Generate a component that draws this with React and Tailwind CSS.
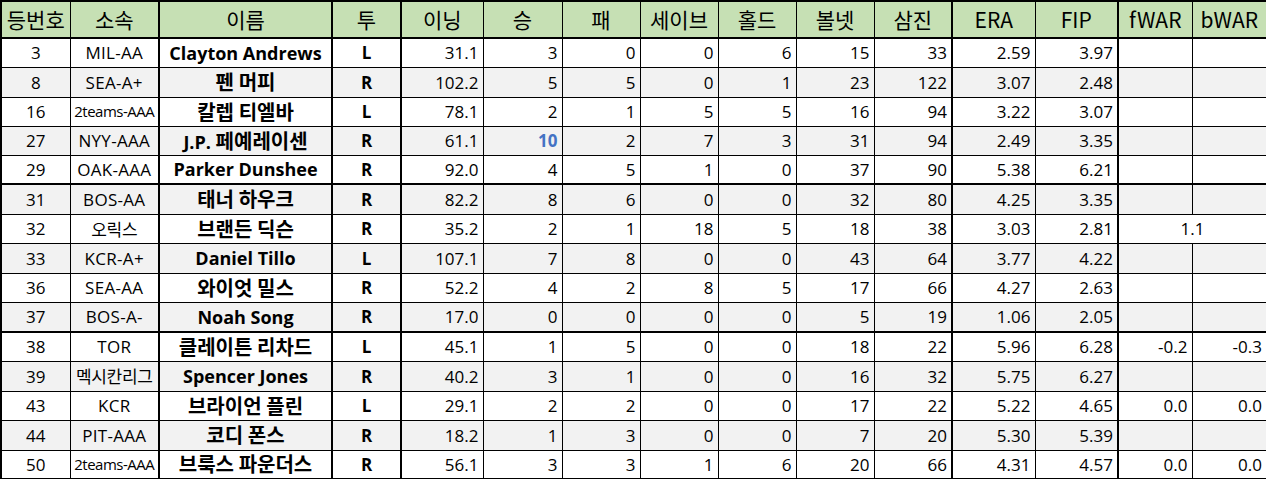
const headers = ['등번호', '소속', '이름', '투', '이닝', '승', '패', '세이브', '홀드', '볼넷', '삼진', 'ERA', 'FIP', 'fWAR', 'bWAR'];

// 칼럼 폭 / 왼쪽 테두리 두께
const cols = [
  { w: 'w-[69px]', l: 'border-l-2' },
  { w: 'w-[89px]', l: 'border-l' },
  { w: 'w-[173px]', l: 'border-l-2' },
  { w: 'w-[69px]', l: 'border-l-2' },
  { w: 'w-[82px]', l: 'border-l-2' },
  { w: 'w-[79px]', l: 'border-l' },
  { w: 'w-[78px]', l: 'border-l' },
  { w: 'w-[78px]', l: 'border-l' },
  { w: 'w-[78px]', l: 'border-l' },
  { w: 'w-[78px]', l: 'border-l' },
  { w: 'w-[78px]', l: 'border-l' },
  { w: 'w-[83px]', l: 'border-l-2' },
  { w: 'w-[83px]', l: 'border-l' },
  { w: 'w-[74px]', l: 'border-l-2' },
  { w: 'w-[75px]', l: 'border-l' },
];

const rows = [
  ['3', 'MIL-AA', 'Clayton Andrews', 'L', '31.1', '3', '0', '0', '6', '15', '33', '2.59', '3.97', '', ''],
  ['8', 'SEA-A+', '펜 머피', 'R', '102.2', '5', '5', '0', '1', '23', '122', '3.07', '2.48', '', ''],
  ['16', '2teams-AAA', '칼렙 티엘바', 'L', '78.1', '2', '1', '5', '5', '16', '94', '3.22', '3.07', '', ''],
  ['27', 'NYY-AAA', 'J.P. 페예레이센', 'R', '61.1', '10', '2', '7', '3', '31', '94', '2.49', '3.35', '', ''],
  ['29', 'OAK-AAA', 'Parker Dunshee', 'R', '92.0', '4', '5', '1', '0', '37', '90', '5.38', '6.21', '', ''],
  ['31', 'BOS-AA', '태너 하우크', 'R', '82.2', '8', '6', '0', '0', '32', '80', '4.25', '3.35', '', ''],
  ['32', '오릭스', '브랜든 딕슨', 'R', '35.2', '2', '1', '18', '5', '18', '38', '3.03', '2.81', '1.1', null],
  ['33', 'KCR-A+', 'Daniel Tillo', 'L', '107.1', '7', '8', '0', '0', '43', '64', '3.77', '4.22', '', ''],
  ['36', 'SEA-AA', '와이엇 밀스', 'R', '52.2', '4', '2', '8', '5', '17', '66', '4.27', '2.63', '', ''],
  ['37', 'BOS-A-', 'Noah Song', 'R', '17.0', '0', '0', '0', '0', '5', '19', '1.06', '2.05', '', ''],
  ['38', 'TOR', '클레이튼 리차드', 'L', '45.1', '1', '5', '0', '0', '18', '22', '5.96', '6.28', '-0.2', '-0.3'],
  ['39', '멕시칸리그', 'Spencer Jones', 'R', '40.2', '3', '1', '0', '0', '16', '32', '5.75', '6.27', '', ''],
  ['43', 'KCR', '브라이언 플린', 'L', '29.1', '2', '2', '0', '0', '17', '22', '5.22', '4.65', '0.0', '0.0'],
  ['44', 'PIT-AAA', '코디 폰스', 'R', '18.2', '1', '3', '0', '0', '7', '20', '5.30', '5.39', '', ''],
  ['50', '2teams-AAA', '브룩스 파운더스', 'R', '56.1', '3', '3', '1', '6', '20', '66', '4.31', '4.57', '0.0', '0.0'],
];

const thickTop = [0, 5, 10];

// 한글 부분만 따로 크기 지정
const Mixed = ({ text, ko }) =>
  text.split(/([가-힣]+)/).map((part, i) =>
    /[가-힣]/.test(part) ? (
      <span key={i} className={`font-['Noto_Sans_CJK_KR',sans-serif] ${ko}`}>{part}</span>
    ) : (
      part
    )
  );

const cellText = (ci, val, ri) => {
  if (ci === 0) return 'text-center text-[17px]';
  if (ci === 1) return val.length > 8 ? 'text-center text-[15px] tracking-[-0.5px]' : 'text-center text-[17px] tracking-[0.3px]';
  if (ci === 2) return 'text-center text-[18px] font-bold';
  if (ci === 3) return 'text-center text-[17px] font-bold';
  if (ci === 5 && ri === 3) return 'text-right pr-1 text-[17px] font-bold text-[#4472c4]';
  return 'text-right pr-1 text-[17px]';
};

export default function App() {
  return (
    <div className="w-[1266px] h-[479px] bg-white overflow-hidden font-['Open_Sans','Noto_Sans_CJK_KR',sans-serif] text-black">
      <table className="table-fixed border-collapse w-[1266px] border-2 border-black">
        <colgroup>
          {cols.map((c, i) => (
            <col key={i} className={c.w} />
          ))}
        </colgroup>
        <thead>
          <tr className="h-[37px] bg-[#c6e0b4]">
            {headers.map((h, i) => (
              <th
                key={h}
                className={`${cols[i].l} border-black border-b-2 p-0 text-center font-normal font-['Noto_Sans_CJK_KR',sans-serif] text-[21px] leading-none ${i === 14 ? 'border-r-2' : ''}`}
              >
                {h}
              </th>
            ))}
          </tr>
        </thead>
        <tbody>
          {rows.map((r, ri) => (
            <tr
              key={r[0]}
              className={`${ri % 2 ? 'bg-[#f2f2f2]' : 'bg-white'} ${[1, 5, 7, 9, 11, 13].includes(ri) ? 'h-[30px]' : 'h-[29px]'}`}
            >
              {r.map((v, ci) => {
                if (v === null) return null;
                const merged = ri === 6 && ci === 13;
                return (
                  <td
                    key={ci}
                    colSpan={merged ? 2 : 1}
                    className={`${cols[ci].l} border-black ${thickTop.includes(ri) ? 'border-t-2' : 'border-t'} border-b p-0 leading-none whitespace-nowrap ${merged ? 'text-center text-[17px]' : cellText(ci, v, ri)} ${ci === 14 || merged ? 'border-r-2' : ''}`}
                  >
                    {ci === 2 ? (
                      <Mixed text={v} ko="text-[20px]" />
                    ) : ci === 1 ? (
                      <Mixed text={v} ko="text-[17px] tracking-[-0.3px]" />
                    ) : (
                      v
                    )}
                  </td>
                );
              })}
            </tr>
          ))}
        </tbody>
      </table>
    </div>
  );
}
